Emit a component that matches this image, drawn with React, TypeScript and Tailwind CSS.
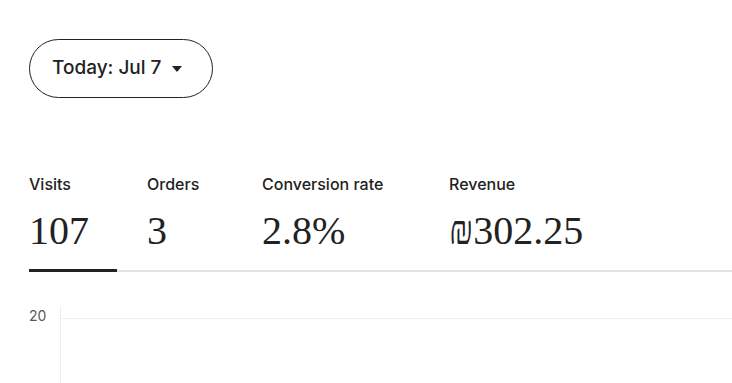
export default function App() {
  const tabs = [
    { label: "Visits", value: "107", w: "w-[88px]", active: true },
    { label: "Orders", value: "3", w: "w-[85px]", active: false },
    { label: "Conversion rate", value: "2.8%", w: "w-[157px]", active: false },
    { label: "Revenue", value: "₪302.25", w: "w-[200px]", active: false },
  ];

  return (
    <div className="w-[732px] h-[383px] overflow-hidden bg-white pl-[29px] pt-[39px] font-['Inter',sans-serif] text-[#222]">
      {/* date picker */}
      <button className="flex h-[59px] w-[184px] items-center gap-[11px] rounded-full border border-[#222] pl-[22px] text-[19px] font-medium text-[#222]">
        <span>Today: Jul 7</span>
        <svg width="10" height="6" viewBox="0 0 10 6">
          <path d="M0 0h10L5 6z" fill="#222" />
        </svg>
      </button>

      {/* stat tabs */}
      <div className="mt-[75px] flex w-[760px] gap-[30px] border-b-2 border-[#e1e3df]">
        {tabs.map((t) => (
          <div
            key={t.label}
            className={`${t.w} shrink-0 pb-[14px] -mb-[2px] ${t.active ? "border-b-[3px] border-[#222]" : "border-b-[3px] border-transparent"}`}
          >
            <div className="text-[16px] leading-[22px] font-medium whitespace-nowrap">{t.label}</div>
            <div className="mt-[12px] font-['Liberation_Serif','DejaVu_Serif',serif] text-[40px] leading-[48px] font-light whitespace-nowrap text-[#222]">
              {t.value}
            </div>
          </div>
        ))}
      </div>

      {/* chart */}
      <div className="mt-[34px] flex h-[100px]">
        <div className="w-[31px] shrink-0 text-[14px] leading-[20px] text-[#595959]">20</div>
        <div className="flex-1 border-l border-[#eeeeee] pt-[12px]">
          <div className="border-t border-[#eeeeee]" />
        </div>
      </div>
    </div>
  );
}
